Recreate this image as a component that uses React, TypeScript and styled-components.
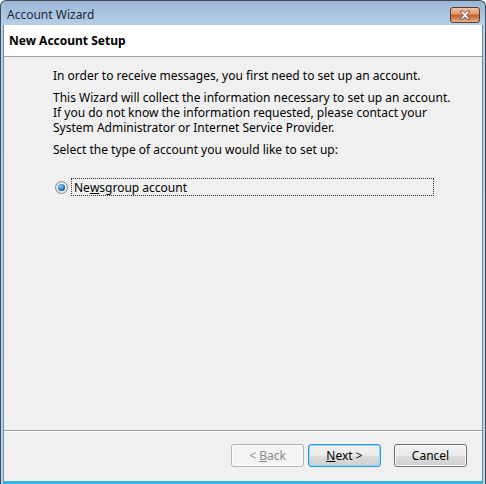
import React from "react";
import styled, { createGlobalStyle } from "styled-components";

const Global = createGlobalStyle`
  html, body { margin: 0; padding: 0; background: #ffffff; }
  body { font-family: "Segoe UI", "Noto Sans", "Open Sans", sans-serif; font-size: 12px; color: #000; }
`;

const Win = styled.div`
  width: 486px;
  height: 484px;
  box-sizing: border-box;
  display: flex;
  flex-direction: column;
  border: 1px solid #3e4a57;
  border-bottom: none;
  border-radius: 6px 6px 0 0;
  background: linear-gradient(#9cb7d5, #b9d1ea 26px, #bcd5ee);
  overflow: hidden;
`;

const TitleBar = styled.div`
  height: 24px;
  flex: none;
  display: flex;
  align-items: center;
  justify-content: space-between;
  padding: 0 5px 0 6px;
  box-sizing: border-box;
`;

const Title = styled.span`
  font-size: 12px;
  color: #1b2a3a;
  padding-top: 2px;
`;

const CloseBtn = styled.div`
  width: 30px;
  height: 16px;
  box-sizing: border-box;
  border: 1px solid #5a3a2e;
  border-radius: 3px;
  background: linear-gradient(#f2c3a4, #e0926a 45%, #c2572a 50%, #d07a4c 70%, #e8b08e);
  display: flex;
  align-items: center;
  justify-content: center;
  margin-top: 4px;
`;

const Client = styled.div`
  flex: 1;
  display: flex;
  flex-direction: column;
  margin: 0 2px 0 2px;
  border-left: 1px solid #6b87a6;
  border-right: 1px solid #6b87a6;
  border-bottom: 3px solid #39b4dd;
  background: #f0f0f0;
`;

const Header = styled.div`
  height: 31px;
  flex: none;
  background: #ffffff;
  border-bottom: 1px solid #a0a0a0;
  display: flex;
  align-items: center;
  padding-left: 5px;
  font-weight: bold;
  font-size: 12px;
`;

const Body = styled.div`
  flex: 1;
  padding: 11px 0 0 49px;
  display: flex;
  flex-direction: column;
`;

const Para = styled.p`
  margin: 0 0 7px 0;
  line-height: 15px;
  white-space: pre-line;
`;

const RadioRow = styled.div`
  display: flex;
  align-items: center;
  margin-top: 14px;
  gap: 3px;
`;

const Radio = styled.div`
  width: 13px;
  height: 13px;
  box-sizing: border-box;
  border-radius: 50%;
  border: 1px solid #8d8d8d;
  background: radial-gradient(circle, #f4f4f4, #dcdcdc);
  display: flex;
  align-items: center;
  justify-content: center;
  margin-left: 2px;
`;

const Dot = styled.div`
  width: 7px;
  height: 7px;
  border-radius: 50%;
  background: radial-gradient(circle at 40% 35%, #8fd3ff, #1a6fc0 60%, #0c3f80);
`;

const Focus = styled.div`
  width: 363px;
  height: 18px;
  box-sizing: border-box;
  border: 1px dotted #333;
  display: flex;
  align-items: center;
  padding-left: 2px;
`;

const Footer = styled.div`
  height: 51px;
  flex: none;
  border-top: 1px solid #a0a0a0;
  box-shadow: inset 0 1px 0 #ffffff;
  display: flex;
  justify-content: flex-end;
  align-items: flex-start;
  padding: 13px 15px 0 0;
  box-sizing: border-box;
`;

const Btn = styled.button<{ $disabled?: boolean; $default?: boolean; $gap?: number }>`
  width: 73px;
  height: 23px;
  margin-left: ${(p) => p.$gap ?? 4}px;
  box-sizing: border-box;
  border-radius: 3px;
  font-family: inherit;
  font-size: 12px;
  padding: 0;
  color: ${(p) => (p.$disabled ? "#8a8a8a" : "#000")};
  border: 1px solid ${(p) => (p.$disabled ? "#adb2b5" : p.$default ? "#3399dd" : "#707070")};
  background: ${(p) =>
    p.$disabled
      ? "#f4f4f4"
      : "linear-gradient(#f2f2f2, #ebebeb 50%, #dddddd 51%, #cfcfcf)"};
  box-shadow: ${(p) => (p.$default ? "inset 0 0 0 1px #8fd7f7" : "inset 0 0 0 1px #fcfcfc")};
`;

const U = styled.span`
  text-decoration: underline;
`;

export default function App() {
  return (
    <>
      <Global />
      <Win>
        <TitleBar>
          <Title>Account Wizard</Title>
          <CloseBtn>
            <svg width="14" height="10" viewBox="0 0 14 10">
              <path d="M2 1 L5 1 L7 3.2 L9 1 L12 1 L8.6 5 L12 9 L9 9 L7 6.8 L5 9 L2 9 L5.4 5 Z" fill="#ffffff" stroke="#5a4a44" strokeWidth="0.8" />
            </svg>
          </CloseBtn>
        </TitleBar>
        <Client>
          <Header>New Account Setup</Header>
          <Body>
            <Para>In order to receive messages, you first need to set up an account.</Para>
            <Para>{"This Wizard will collect the information necessary to set up an account.\nIf you do not know the information requested, please contact your\nSystem Administrator or Internet Service Provider."}</Para>
            <Para>Select the type of account you would like to set up:</Para>
            <RadioRow>
              <Radio>
                <Dot />
              </Radio>
              <Focus>
                Ne<U>w</U>sgroup account
              </Focus>
            </RadioRow>
          </Body>
          <Footer>
            <Btn $disabled>
              &lt; <U>B</U>ack
            </Btn>
            <Btn $default>
              <U>N</U>ext &gt;
            </Btn>
            <Btn $gap={13}>Cancel</Btn>
          </Footer>
        </Client>
      </Win>
    </>
  );
}
